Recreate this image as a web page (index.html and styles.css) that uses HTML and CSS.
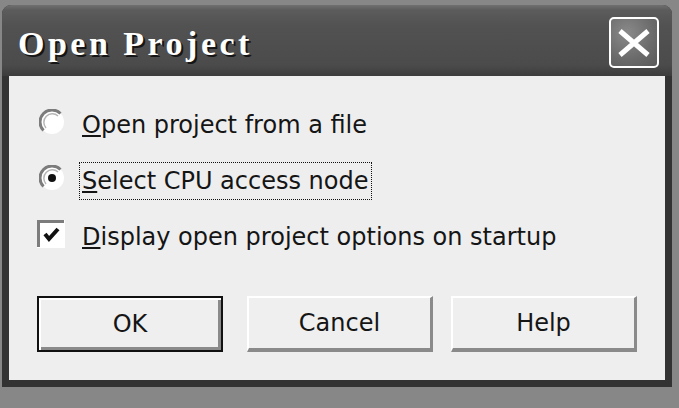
FILE: index.html
```html
<!DOCTYPE html>
<html lang="en">

<head>
    <meta charset="UTF-8">
    <meta name="viewport" content="width=device-width, initial-scale=1.0">
    <title>Open Project</title>
    <link rel="stylesheet" href="styles.css">
</head>

<body>
    <div class="window">
        <div class="titlebar">
            <span class="title">Open Project</span>
            <button class="close" aria-label="Close">
                <svg width="46" height="47" viewBox="0 0 46 47">
                    <path d="M9 12 L37 36 M37 12 L9 36" stroke="#ffffff" stroke-width="5" fill="none" />
                </svg>
            </button>
        </div>

        <div class="content">
            <div class="options">
                <div class="option">
                    <svg class="radio" width="26" height="26" viewBox="0 0 26 26">
                        <circle cx="13" cy="13" r="12" fill="#ffffff" />
                        <path d="M4.5 21.5 A12 12 0 0 1 21.5 4.5" stroke="#7c7c7c" stroke-width="3" fill="none" />
                        <path d="M7 19 A8.5 8.5 0 0 1 19 7" stroke="#b5b5b5" stroke-width="1.5" fill="none" />
                    </svg>
                    <span class="label"><u>O</u>pen project from a file</span>
                </div>
                <div class="option">
                    <svg class="radio" width="26" height="26" viewBox="0 0 26 26">
                        <circle cx="13" cy="13" r="12" fill="#ffffff" />
                        <path d="M4.5 21.5 A12 12 0 0 1 21.5 4.5" stroke="#7c7c7c" stroke-width="3" fill="none" />
                        <path d="M7 19 A8.5 8.5 0 0 1 19 7" stroke="#b5b5b5" stroke-width="1.5" fill="none" />
                        <circle cx="13" cy="13" r="4" fill="#111111" />
                    </svg>
                    <span class="label focus"><u>S</u>elect CPU access node</span>
                </div>
                <div class="option">
                    <svg class="checkbox" width="28" height="28" viewBox="0 0 28 28">
                        <rect x="0" y="0" width="28" height="28" fill="#ffffff" />
                        <path d="M1.5 27 V1.5 H27" stroke="#7c7c7c" stroke-width="3" fill="none" />
                        <path d="M8 14 L12 19 L21 9" stroke="#111111" stroke-width="4" fill="none" />
                    </svg>
                    <span class="label"><u>D</u>isplay open project options on startup</span>
                </div>
            </div>

            <div class="buttons">
                <button class="btn default">OK</button>
                <button class="btn">Cancel</button>
                <button class="btn">Help</button>
            </div>
        </div>
    </div>
</body>

</html>
```

FILE: styles.css
```css
body {
    margin: 0;
    padding: 0;
    background-color: #878787;
    font-family: "DejaVu Sans", Tahoma, sans-serif;
}

.window {
    width: 670px;
    height: 382px;
    margin: 5px 0 0 2px;
    background-color: #333333;
    border-radius: 9px 9px 0 0;
    display: flex;
    flex-direction: column;
}

.titlebar {
    height: 71px;
    flex-shrink: 0;
    display: flex;
    align-items: center;
    padding: 0 13px 0 16px;
    border-radius: 9px 9px 0 0;
    background: linear-gradient(#707070 0, #5c5c5c 5px, #525252 20px, #4b4b4b 60px, #3c3c3c 71px);
}

.title {
    padding-top: 6px;
    color: #ffffff;
    font-family: "Liberation Serif", serif;
    font-weight: bold;
    font-size: 34px;
    letter-spacing: 3.5px;
    text-shadow: 2px 2px 0 #151515;
}

.close {
    margin-left: auto;
    margin-top: 4px;
    width: 50px;
    height: 51px;
    padding: 0;
    border: 2px solid #ffffff;
    border-radius: 5px;
    background: radial-gradient(circle at 35% 30%, #8a8a8a, #6a6a6a 60%, #5a5a5a);
    display: flex;
    align-items: center;
    justify-content: center;
}

.content {
    flex: 1;
    margin: 0 7px 7px 7px;
    padding: 30px 0 0 30px;
    background-color: #eeeeee;
    color: #151515;
}

.options {
    display: flex;
    flex-direction: column;
    gap: 18px;
}

.option {
    height: 38px;
    display: flex;
    align-items: center;
}

.radio {
    margin-right: 14px;
    margin-bottom: 7px;
}

.checkbox {
    margin-left: -2px;
    margin-right: 14px;
    margin-bottom: 7px;
}

.label {
    font-size: 24px;
    line-height: 36px;
    padding: 0 2px;
    border: 1px dotted transparent;
}

.label.focus {
    border-color: #111111;
}

.buttons {
    display: flex;
    gap: 18px;
    margin: 40px 0 0 -2px;
}

.btn {
    width: 186px;
    height: 56px;
    padding: 0;
    font-family: "DejaVu Sans", Tahoma, sans-serif;
    font-size: 24px;
    color: #151515;
    background-color: #efefef;
    border: 2px solid;
    border-color: #ffffff #8a8a8a #8a8a8a #ffffff;
    border-bottom-width: 4px;
    border-right-width: 3px;
}

.btn.default {
    margin-right: 6px;
    border: 2px solid #111111;
    box-shadow: inset 2px 2px 0 #ffffff, inset -3px -3px 0 #8a8a8a;
}
```
